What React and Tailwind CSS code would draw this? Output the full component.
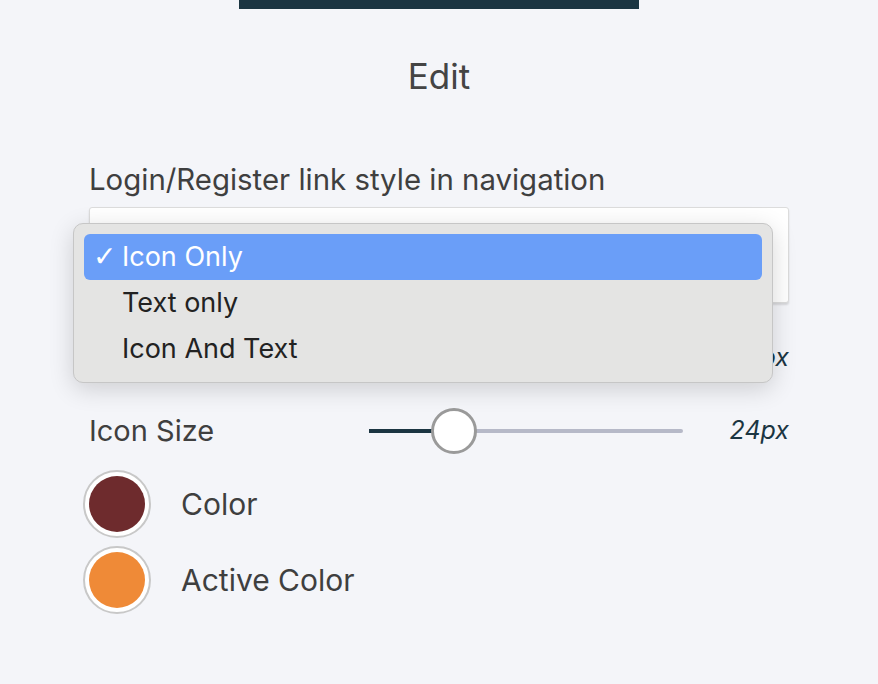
import React from "react";

const options = ["Icon Only", "Text only", "Icon And Text"];

const Swatch = ({ color, label }) => (
  <div className="flex items-center gap-[30px] -ml-[6px]">
    <div className="w-[68px] h-[68px] rounded-full bg-white border-2 border-[#c8c8c8] flex items-center justify-center">
      <div className="w-[56px] h-[56px] rounded-full" style={{ backgroundColor: color }} />
    </div>
    <span className="text-[30px] text-[#3f3f3f]">{label}</span>
  </div>
);

const App = () => {
  return (
    <div className="min-h-[684px] bg-[#f4f5f9] font-['Inter',sans-serif] overflow-hidden">
      <div className="w-[400px] h-[9px] bg-[#1b3542] mx-auto" />
      <h1 className="text-center text-[35px] text-[#444] mt-[46px] leading-[42px]">Edit</h1>
      <div className="w-[700px] mx-auto mt-[65px]">
        <label className="block text-[29.4px] text-[#3f3f3f] leading-[36px]">
          Login/Register link style in navigation
        </label>
        <div className="relative mt-[9px]">
          <div className="h-[96px] bg-white border border-[#dcdcdc] rounded-[3px] shadow-[0_2px_2px_rgba(0,0,0,0.12)]" />
          <div className="absolute left-[-16px] top-[16px] w-[700px] bg-[#e4e4e3] border border-[#c6c6c6] rounded-[10px] shadow-[0_6px_24px_rgba(0,0,0,0.16)] p-[10px] z-10">
            {options.map((o, i) => (
              <div
                key={o}
                className={`h-[46px] flex items-center rounded-[6px] text-[27px] ${
                  i === 0 ? "bg-[#6a9ef8] text-white" : "text-[#222]"
                }`}
              >
                <span className="w-[38px] pl-[9px] text-[28px] font-['DejaVu_Sans',sans-serif]">
                  {i === 0 ? "✓" : ""}
                </span>
                {o}
              </div>
            ))}
          </div>
          <div className="flex justify-end items-center mt-[40px] h-[30px]">
            <span className="italic text-[25px] text-[#1b3542]">24px</span>
          </div>
        </div>
        <div className="flex items-center mt-[35px] h-[46px]">
          <span className="w-[280px] text-[29px] text-[#3f3f3f]">Icon Size</span>
          <div className="relative w-[314px] h-[4px] bg-[#b6b9c8] rounded-full">
            <div className="absolute left-0 top-0 h-[4px] w-[84px] bg-[#1b3542]" />
            <div className="absolute left-[62px] top-[-21px] w-[46px] h-[46px] rounded-full bg-white border-[3px] border-[#9a9a9a]" />
          </div>
          <span className="ml-auto italic text-[25px] text-[#1b3542]">24px</span>
        </div>
        <div className="flex flex-col gap-[8px] mt-[16px]">
          <Swatch color="#6e2b2d" label="Color" />
          <Swatch color="#ef8a37" label="Active Color" />
        </div>
      </div>
    </div>
  );
};

export default App;
